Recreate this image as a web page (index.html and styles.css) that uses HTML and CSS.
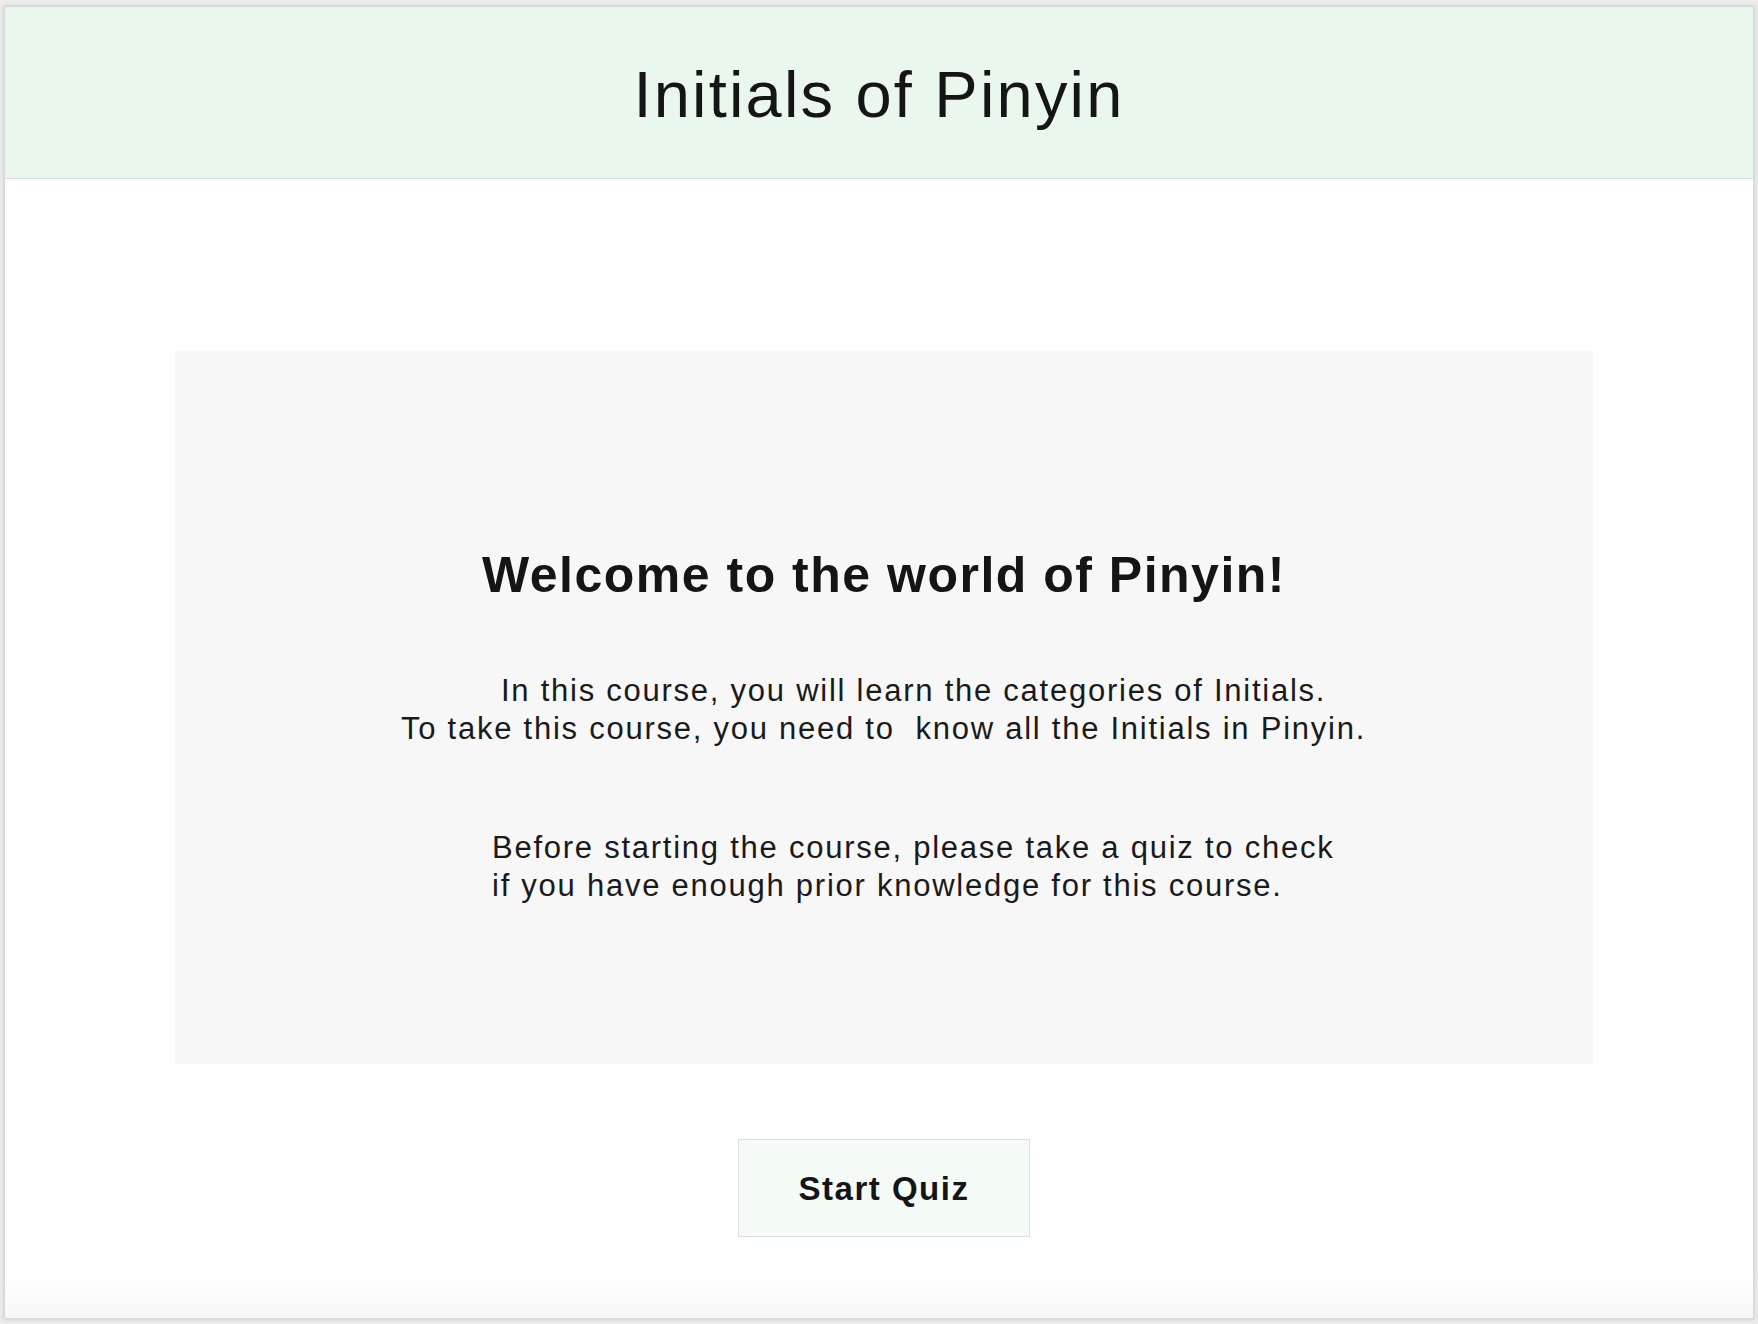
FILE: index.html
```html
<!DOCTYPE html>
<html lang="en">
<head>
<meta charset="utf-8">
<title>Initials of Pinyin</title>
<link rel="stylesheet" href="styles.css">
</head>
<body>
<div class="frame">
  <header class="top-bar">
    <h1 class="page-title">Initials of Pinyin</h1>
  </header>
  <main class="content">
    <section class="intro-card">
      <h2 class="welcome">Welcome to the world of Pinyin!</h2>
      <div class="para para-one">
        <div class="line indent">In this course, you will learn the categories of Initials.</div>
        <div class="line">To take this course, you need to&nbsp; know all the Initials in Pinyin.</div>
      </div>
      <div class="para para-two">
        <div class="line">Before starting the course, please take a quiz to check</div>
        <div class="line">if you have enough prior knowledge for this course.</div>
      </div>
    </section>
    <div class="actions">
      <button class="start-btn" type="button">Start Quiz</button>
    </div>
  </main>
</div>
</body>
</html>
```

FILE: styles.css
```css
html, body {
  margin: 0;
  padding: 0;
}

body {
  width: 1758px;
  height: 1324px;
  background: #ececec;
  font-family: "Liberation Sans", Arial, Helvetica, sans-serif;
  color: #141414;
  overflow: hidden;
}

.frame {
  box-sizing: border-box;
  margin: 6px 0 0 4px;
  width: 1750px;
  height: 1313px;
  border: 1px solid #d9d9d9;
  background: #ffffff;
  box-shadow: 0 0 4px rgba(0, 0, 0, 0.16);
  display: flex;
  flex-direction: column;
}

.top-bar {
  box-sizing: border-box;
  height: 172px;
  background: #eaf7ec;
  border-bottom: 1px solid #d6e3d8;
  display: flex;
  align-items: center;
  justify-content: center;
  padding-top: 4px;
}

.page-title {
  margin: 0;
  font-weight: 400;
  font-size: 65px;
  line-height: 65px;
  letter-spacing: 2.2px;
  color: #151515;
}

.content {
  flex: 1;
  display: flex;
  flex-direction: column;
  background: linear-gradient(to bottom, #ffffff 0, #ffffff 1095px, #f7f7f7 100%);
}

.intro-card {
  box-sizing: border-box;
  margin: 172px 0 0 170px;
  width: 1418px;
  height: 713px;
  background: #f7f7f7;
  padding-top: 194px;
}

.welcome {
  margin: 0;
  text-align: center;
  font-weight: 700;
  font-size: 50px;
  line-height: 60px;
  letter-spacing: 1.5px;
  color: #151515;
}

.para {
  font-size: 31px;
  line-height: 38px;
  letter-spacing: 1.75px;
  color: #1a1a1a;
  white-space: nowrap;
}

.para-one {
  margin: 67px 0 0 226px;
}

.para-one .indent {
  padding-left: 100px;
}

.para-two {
  margin: 81px 0 0 317px;
}

.actions {
  display: flex;
  justify-content: center;
  padding-left: 10px;
  margin-top: 75px;
}

.start-btn {
  box-sizing: border-box;
  width: 292px;
  height: 98px;
  padding: 2px 0 0 0;
  background: #f4faf6;
  border: 1px solid #dcdfdd;
  border-radius: 0;
  font-family: "Liberation Sans", Arial, Helvetica, sans-serif;
  font-weight: 700;
  font-size: 33px;
  letter-spacing: 1.5px;
  color: #151515;
  display: flex;
  align-items: center;
  justify-content: center;
}
```
